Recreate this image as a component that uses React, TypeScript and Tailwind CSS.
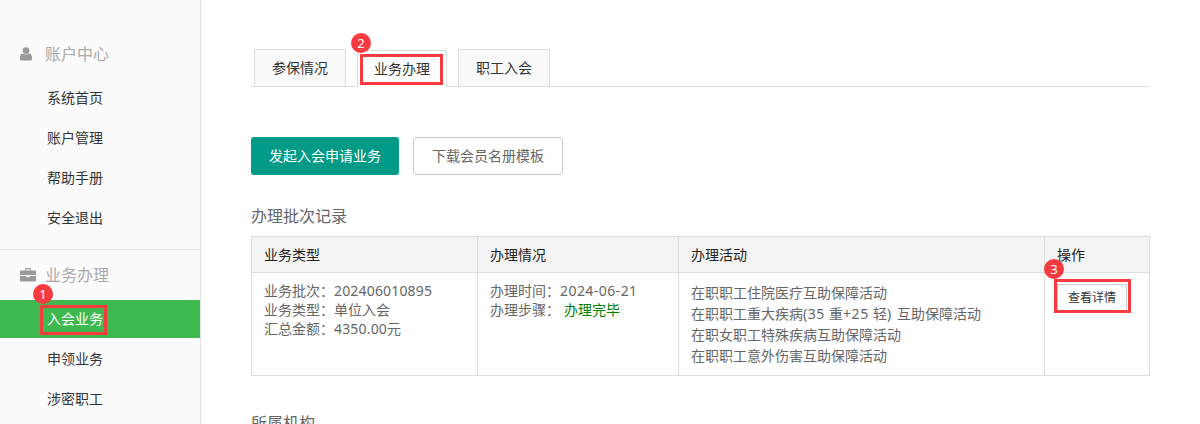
import React from "react";

const font = { fontFamily: '"Noto Sans","Noto Sans CJK SC",sans-serif' };

function Badge({ n, className }: { n: string; className: string }) {
  return (
    <span className={"absolute z-20 flex h-5 w-5 items-center justify-center rounded-full bg-[#f93a3f] text-[13px] leading-none text-white " + className}>
      {n}
    </span>
  );
}

function SideItem({ label }: { label: string }) {
  return <div className="flex h-10 items-center pl-[47px] text-sm text-[#333]">{label}</div>;
}

function UserIcon() {
  return (
    <svg width="12" height="14" viewBox="0 0 12 14" fill="#999">
      <circle cx="6" cy="3.6" r="3.4" />
      <path d="M0 12.2V10c0-2 1.300-3.300 3-3.500 1.800 1.300 4.200 1.300 6 0 1.700.2 3 1.500 3 3.500v2.200c0 .8-.7 1.300-1.500 1.300h-9C.7 13.500 0 13 0 12.200z" />
    </svg>
  );
}

function CaseIcon() {
  return (
    <svg width="16" height="14" viewBox="0 0 16 14" fill="#999">
      <path d="M5 2.500V1.300C5 .6 5.500 0 6.200 0h3.600C10.500 0 11 .6 11 1.300v1.200h-1.200V1.200H6.200v1.300z" />
      <path d="M1 2.500h14c.6 0 1 .4 1 1V7H0V3.500c0-.6.400-1 1-1z" />
      <path d="M0 8h6.500v1.300h3V8H16v4.500c0 .6-.4 1-1 1H1c-.6 0-1-.4-1-1z" />
    </svg>
  );
}

function Tab({ label, active }: { label: string; active?: boolean }) {
  return active ? (
    <div className="relative mb-[-1px] ml-[11px] flex h-[37px] w-[90px] items-center justify-center border border-b-0 border-[#ddd] bg-white text-sm text-[#333]">
      {label}
    </div>
  ) : (
    <div className="ml-[11px] flex h-[37px] w-[92px] items-center justify-center border border-b-0 border-[#ddd] bg-[#f9f9f9] text-sm text-[#333] first:ml-[3px]">
      {label}
    </div>
  );
}

export default function App() {
  return (
    <div style={font} className="flex h-[424px] w-[1200px] overflow-hidden bg-white">
      <aside className="h-full w-[201px] shrink-0 border-r border-[#e1e1e1] bg-[#fbfbfb]">
        <div className="border-b border-[#e1e1e1] pt-[34px] pb-[11px]">
          <div className="mb-[4px] flex h-10 items-center text-base text-[#aaa]">
            <span className="ml-5 flex w-[25px]"><UserIcon /></span>
            账户中心
          </div>
          <SideItem label="系统首页" />
          <SideItem label="账户管理" />
          <SideItem label="帮助手册" />
          <SideItem label="安全退出" />
        </div>
        <div className="flex h-[50px] items-center text-base text-[#aaa]">
          <span className="ml-5 flex w-[25px]"><CaseIcon /></span>
          业务办理
        </div>
        <div className="relative flex h-[38px] items-center bg-[#3db94f] pl-[47px] text-sm text-white">
          入会业务
          <Badge n="1" className="left-[33px] top-[-16px]" />
          <span className="absolute left-[40px] top-[5px] z-10 h-[30px] w-[67px] border-[3px] border-[#f93a3f]" />
        </div>
        <div className="pt-[1px]">
          <SideItem label="申领业务" />
          <SideItem label="涉密职工" />
        </div>
      </aside>

      <main className="w-[899px] ml-[50px] shrink-0 pt-[49px]">
        <div className="relative flex items-end border-b border-[#ddd]">
          <Tab label="参保情况" />
          <Tab label="业务办理" active />
          <Tab label="职工入会" />
          <Badge n="2" className="left-[100px] top-[-16px]" />
          <span className="absolute left-[109px] top-[5px] z-10 h-[31px] w-[83px] border-[3px] border-[#f93a3f]" />
        </div>

        <div className="mt-[50px] flex gap-[14px]">
          <button className="h-[38px] w-[148px] rounded-[3px] bg-[#009a87] text-sm text-white">发起入会申请业务</button>
          <button className="h-[38px] w-[150px] rounded-[3px] border border-[#ccc] bg-white text-sm text-[#666]">下载会员名册模板</button>
        </div>

        <h3 className="mt-[29px] mb-[8px] text-base leading-[24px] font-normal text-[#666]">办理批次记录</h3>

        <table className="w-[898px] table-fixed border-collapse text-sm text-[#666]">
          <colgroup>
            <col className="w-[226px]" />
            <col className="w-[201px]" />
            <col className="w-[366px]" />
            <col className="w-[105px]" />
          </colgroup>
          <thead>
            <tr className="h-9 bg-[#f4f4f4] text-left text-[#222]">
              <th className="border border-[#ddd] px-3 font-normal">业务类型</th>
              <th className="border border-[#ddd] px-3 font-normal">办理情况</th>
              <th className="border border-[#ddd] px-3 font-normal">办理活动</th>
              <th className="border border-[#ddd] px-3 font-normal">操作</th>
            </tr>
          </thead>
          <tbody>
            <tr className="h-[103px] align-top">
              <td className="border border-[#ddd] px-3 pt-2 leading-[19px]">
                <div>业务批次：<span className="tracking-[0.17px]">202406010895</span></div>
                <div>业务类型：单位入会</div>
                <div>汇总金额：<span className="tracking-[0.17px]">4350.00</span>元</div>
              </td>
              <td className="border border-[#ddd] px-3 pt-2 leading-[19px]">
                <div>办理时间：<span className="tracking-[0.45px]">2024-06-21</span></div>
                <div>办理步骤：<span className="ml-[4px] text-[#008000]">办理完毕</span></div>
              </td>
              <td className="border border-[#ddd] px-3 pt-[9px] leading-[21px]">
                <div>在职职工住院医疗互助保障活动</div>
                <div>
                  在职职工重大疾病<span className="tracking-[0.55px]">(35 </span>重<span className="tracking-[0.55px]">+25 </span>轻<span className="tracking-[1.1px]">) </span>互助保障活动
                </div>
                <div>在职女职工特殊疾病互助保障活动</div>
                <div>在职职工意外伤害互助保障活动</div>
              </td>
              <td className="relative border border-[#ddd] px-3 pt-[11px]">
                <button className="h-[27px] w-[70px] border border-[#ccc] bg-white text-xs leading-none text-[#333]">查看详情</button>
                <Badge n="3" className="left-[-1px] top-[-14px]" />
                <span className="absolute left-[9px] top-[6px] z-10 h-[34px] w-[77px] border-[3px] border-[#f93a3f]" />
              </td>
            </tr>
          </tbody>
        </table>

        <h3 className="mt-[35px] text-base font-normal leading-[24px] text-[#666]">所属机构</h3>
      </main>
    </div>
  );
}
